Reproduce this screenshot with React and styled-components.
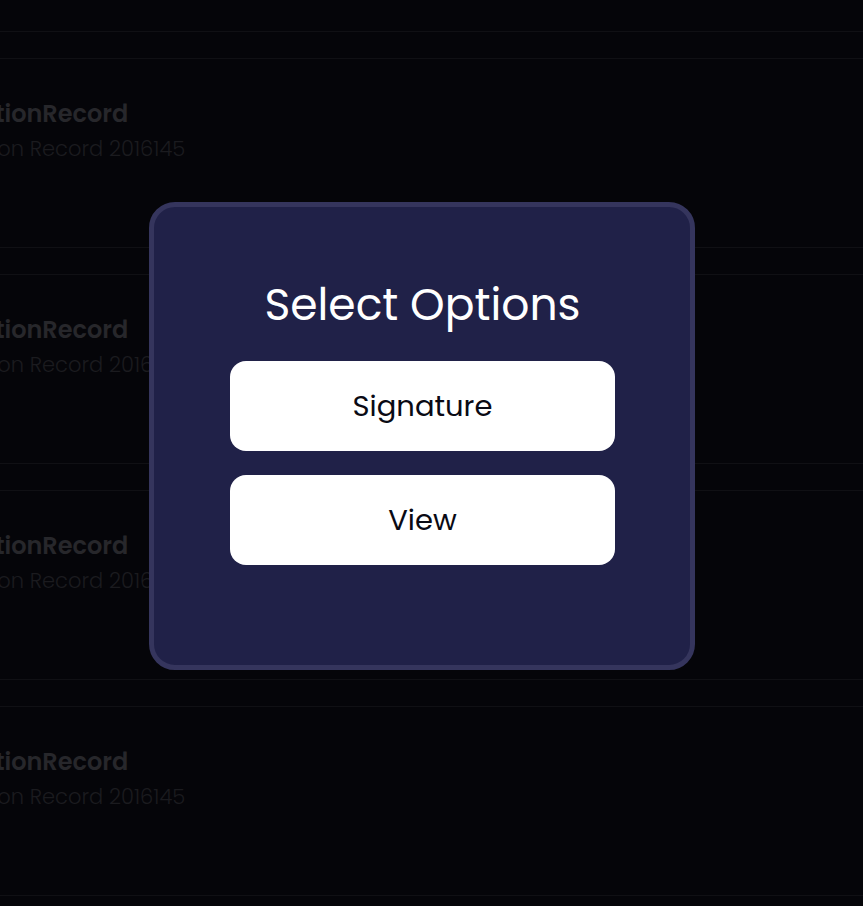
import React from 'react';
import styled, { createGlobalStyle } from 'styled-components';

const GlobalStyle = createGlobalStyle`
  html, body {
    margin: 0;
    padding: 0;
    background: #050509;
    overflow: hidden;
  }
  body {
    font-family: 'Poppins', 'Inter', 'Noto Sans', sans-serif;
  }
`

const Page = styled.div`
  height: 906px;
  overflow: hidden;
  background: #050509;
`

const List = styled.div`
  display: flex;
  flex-direction: column;
  gap: 26px;
  margin-top: -158px;
`

const Card = styled.div`
  box-sizing: border-box;
  height: 190px;
  padding: 39px 0;
  border-top: 1px solid #101014;
  border-bottom: 1px solid #101014;
  white-space: nowrap;
`

const RecordText = styled.div`
  display: flex;
  flex-direction: column;
  gap: 4px;
`

const RecordTitle = styled.div`
  margin-left: -86px;
  font-size: 24px;
  line-height: 32px;
  font-weight: 600;
  color: #27272b;
`

const RecordSub = styled.div`
  margin-left: -84px;
  font-size: 21px;
  line-height: 30px;
  font-weight: 300;
  color: #1b1b1f;
`

const Overlay = styled.div`
  position: fixed;
  inset: 0;
  display: flex;
  align-items: center;
  justify-content: center;
  padding: 0 19px 34px 0;
`

const Modal = styled.div`
  box-sizing: border-box;
  width: 546px;
  height: 468px;
  padding: 72px 75px 0 76px;
  background: #202148;
  border: 5px solid #35355d;
  border-radius: 26px;
  display: flex;
  flex-direction: column;
  align-items: center;
`

const Title = styled.h2`
  margin: 0 0 30px;
  font-size: 44px;
  line-height: 52px;
  font-weight: 400;
  color: #ffffff;
`

const Options = styled.div`
  display: flex;
  flex-direction: column;
  gap: 24px;
  width: 100%;
`

const OptionButton = styled.button`
  height: 90px;
  width: 100%;
  border: none;
  border-radius: 16px;
  background: #ffffff;
  color: #0a0a14;
  font-family: inherit;
  font-size: 29px;
  font-weight: 400;
  cursor: pointer;
`

const records = ['2016145', '2016145', '2016145', '2016145', '2016145']

export default function App() {
    return (
        <Page>
            <GlobalStyle />
            <List>
                {records.map((id, i) => (
                    <Card key={i}>
                        <RecordText>
                            <RecordTitle>InspectionRecord</RecordTitle>
                            <RecordSub>Inspection Record {id}</RecordSub>
                        </RecordText>
                    </Card>
                ))}
            </List>
            <Overlay>
                <Modal>
                    <Title>Select Options</Title>
                    <Options>
                        <OptionButton>Signature</OptionButton>
                        <OptionButton>View</OptionButton>
                    </Options>
                </Modal>
            </Overlay>
        </Page>
    )
}
